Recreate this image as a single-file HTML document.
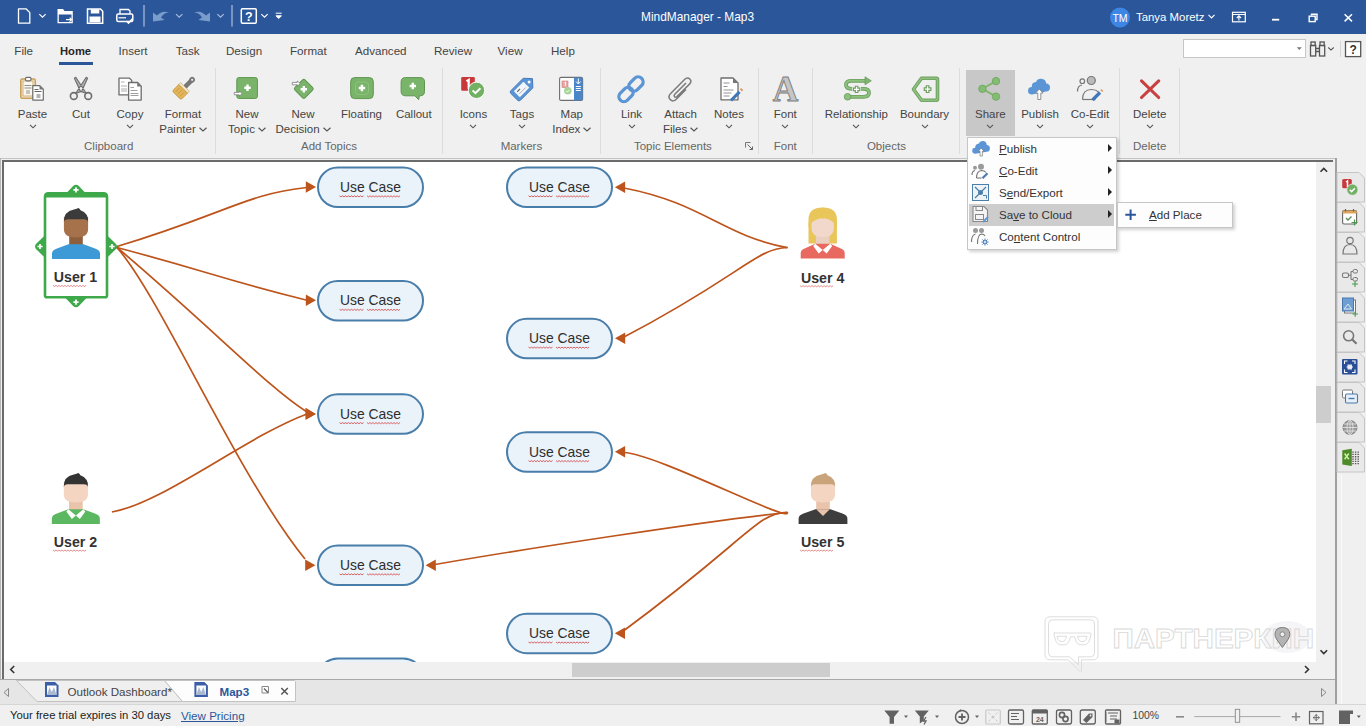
<!DOCTYPE html>
<html><head><meta charset="utf-8"><style>
*{margin:0;padding:0;box-sizing:border-box}
html,body{width:1366px;height:726px;overflow:hidden;background:#f0f0f0;font-family:"Liberation Sans",sans-serif;color:#444}
.a{position:absolute}
.tt{position:absolute;color:#fff;white-space:nowrap}
.tab{position:absolute;top:44px;font-size:11.6px;color:#444;white-space:nowrap}
.lbl{position:absolute;width:100px;font-size:11.5px;color:#444;white-space:nowrap;text-align:center;line-height:14.6px}
.glbl{position:absolute;width:120px;top:139px;font-size:11.5px;color:#666;white-space:nowrap;text-align:center;line-height:14px}
.sep{position:absolute;top:68px;width:1px;height:86px;background:#dcdcdc}
svg{position:absolute;overflow:visible}
.mi{position:absolute;left:999px;font-size:11.6px;color:#333;white-space:nowrap}
.u{text-decoration:underline}
</style></head><body>
<div class="a" style="left:0;top:0;width:1366px;height:34px;background:#2b579a"></div>
<div class="tt" style="left:641px;top:10px;font-size:11.9px">MindManager - Map3</div>
<div class="tab" style="left:14.3px;">File</div>
<div class="tab" style="left:60px;color:#262626;font-weight:bold;font-size:11.2px;top:45px">Home</div>
<div class="tab" style="left:118.6px;">Insert</div>
<div class="tab" style="left:175.7px;">Task</div>
<div class="tab" style="left:226px;">Design</div>
<div class="tab" style="left:290px;">Format</div>
<div class="tab" style="left:355px;">Advanced</div>
<div class="tab" style="left:434px;">Review</div>
<div class="tab" style="left:497.6px;">View</div>
<div class="tab" style="left:551px;">Help</div>
<div class="a" style="left:59px;top:62px;width:34px;height:3px;background:#2b579a"></div>
<div class="a" style="left:0;top:158px;width:1337px;height:1px;background:#c4c4c4"></div>
<div class="a" style="left:0;top:158px;width:1px;height:522px;background:#b8b8b8"></div>
<div class="a" style="left:2px;top:160px;width:1331px;height:2px;background:#6b6b6b"></div>
<div class="a" style="left:2px;top:160px;width:2px;height:519px;background:#6b6b6b"></div>
<div class="a" style="left:1335px;top:158px;width:2px;height:522px;background:#a0a0a0"></div>
<div class="a" style="left:1316px;top:162px;width:19px;height:517px;background:#f0f0f0"></div>
<div class="a" style="left:1316px;top:386px;width:15px;height:37px;background:#cdcdcd"></div>
<div class="a" style="left:4px;top:662px;width:1312px;height:17px;background:#f0f0f0"></div>
<div class="a" style="left:572px;top:663px;width:258px;height:14px;background:#cdcdcd"></div>
<div class="a" style="left:0;top:679px;width:1337px;height:1px;background:#a8a8a8"></div>
<svg width="1366" height="34" style="left:0;top:0" viewBox="0 0 1366 34"><path d="M18.5 8.8h7.5l3.8 3.8v10.6h-11.3z" fill="none" stroke="#fff" stroke-width="1.3" stroke-linejoin="round"/><path d="M39.3 14.2l3.2 3 3.2-3" fill="none" stroke="#fff" stroke-width="1.1"/><path d="M57.5 9h5.5l1.5 2h8.3v12.3h-15.3z" fill="#fff"/><rect x="58.8" y="14.5" width="12.7" height="7.5" fill="#2b579a"/><path d="M66 19.6h5.5 M69.6 17.6l2 2-2 2" stroke="#fff" stroke-width="1.1" fill="none"/><path d="M87.5 9h13l2.2 2.2v12.1h-15.2z" fill="none" stroke="#fff" stroke-width="1.5"/><rect x="90.8" y="9.3" width="8.5" height="4.2" fill="#fff"/><rect x="89.5" y="16.5" width="11" height="5.8" fill="#fff"/><rect x="116.8" y="14" width="16" height="7.5" rx="1.5" fill="none" stroke="#fff" stroke-width="1.5"/><path d="M120 14v-4.5h8.5l1.5 1.5v3" fill="none" stroke="#fff" stroke-width="1.3"/><path d="M118.5 17.8h7.5" stroke="#fff" stroke-width="1.2"/><path d="M126.5 21l2 2 4-4.2" stroke="#fff" stroke-width="1.6" fill="none"/><rect x="143.5" y="5" width="1" height="21.5" fill="#c8d4e8"/><path d="M153 21.5 L153 12.5 L157 15.5 Q162 10 169 12.5 Q164 12.5 161 17.5 L164.5 20z" fill="#7a9ccc"/><path d="M176 14.2l3.2 3 3.2-3" fill="none" stroke="#a9c0e0" stroke-width="1.1"/><path d="M210 21.5 L210 12.5 L206 15.5 Q201 10 194 12.5 Q199 12.5 202 17.5 L198.5 20z" fill="#7a9ccc"/><path d="M217.3 14.2l3.2 3 3.2-3" fill="none" stroke="#a9c0e0" stroke-width="1.1"/><rect x="231.5" y="5" width="1" height="21.5" fill="#c8d4e8"/><rect x="241.3" y="8.8" width="15" height="14.5" rx="1.2" fill="none" stroke="#fff" stroke-width="1.5"/><text x="248.8" y="21" font-family="Liberation Sans" font-weight="bold" font-size="12.5" fill="#fff" text-anchor="middle">?</text><path d="M261.3 14.2l3.2 3 3.2-3" fill="none" stroke="#fff" stroke-width="1.1"/><path d="M275.7 13.2h6 M276 15.8l2.7 2.7 2.7-2.7z" stroke="#fff" stroke-width="1" fill="#fff"/><circle cx="1120" cy="17.5" r="10" fill="#3d86e6"/><text x="1120" y="21.6" font-family="Liberation Sans" font-size="10.5" fill="#fff" text-anchor="middle">TM</text><path d="M1208.5 14.8l3 3 3-3" fill="none" stroke="#fff" stroke-width="1.2"/><rect x="1232.5" y="12.3" width="12.8" height="9.5" fill="none" stroke="#fff" stroke-width="1.2"/><path d="M1232.5 14.5h12.8" stroke="#fff" stroke-width="1"/><path d="M1238.9 20.5v-4.5 M1236.8 18l2.1-2.2 2.1 2.2" stroke="#fff" stroke-width="1.1" fill="none"/><rect x="1272" y="18.8" width="7.2" height="1.8" fill="#fff"/><rect x="1309.2" y="16.2" width="6" height="5.4" fill="none" stroke="#fff" stroke-width="1.4"/><path d="M1311.5 15.5v-1.3h5.5v5.3h-1.2" fill="none" stroke="#fff" stroke-width="1.4"/><path d="M1344.6 14.2l7.4 7.2 M1352 14.2l-7.4 7.2" stroke="#fff" stroke-width="1.5"/></svg>
<div class="tt" style="left:1136px;top:11px;font-size:11.4px">Tanya Moretz</div>
<div class="a" style="left:1183px;top:39px;width:123px;height:19px;background:#fff;border:1px solid #c6c6c6"></div>
<svg width="1366" height="70" style="left:0;top:0" viewBox="0 0 1366 70"><path d="M1296.8 47.3h5l-2.5 2.6z" fill="#777"/><g fill="none" stroke="#555" stroke-width="1.3"><rect x="1311" y="42" width="4.2" height="3.5"/><rect x="1320" y="42" width="4.2" height="3.5"/><rect x="1310.5" y="45.5" width="5.2" height="10.5"/><rect x="1319.5" y="45.5" width="5.2" height="10.5"/><path d="M1315.7 48.5h3.8 M1315.7 51.5h3.8"/></g><path d="M1328.3 47.5l2.7 2.6 2.7-2.6" fill="none" stroke="#555" stroke-width="1.1"/><rect x="1340" y="41" width="1" height="16" fill="#d6d6d6"/><rect x="1345.5" y="41.6" width="15.2" height="15" fill="#fff" stroke="#555" stroke-width="1.3"/><text x="1353.1" y="54" font-family="Liberation Sans" font-weight="bold" font-size="12" fill="#333" text-anchor="middle">?</text></svg>
<div class="a" style="left:966px;top:70px;width:49px;height:66px;background:#c8c8c8"></div>
<div class="lbl" style="left:-17.5px;top:107px">Paste</div>
<svg width="8" height="5" viewBox="0 0 8 5" style="left:28.5px;top:124.2px"><path d="M1 0.8 L4 3.8 L7 0.8" fill="none" stroke="#555" stroke-width="1.15"/></svg>
<div class="lbl" style="left:31px;top:107px">Cut</div>
<div class="lbl" style="left:80px;top:107px">Copy</div>
<svg width="8" height="5" viewBox="0 0 8 5" style="left:126px;top:124.2px"><path d="M1 0.8 L4 3.8 L7 0.8" fill="none" stroke="#555" stroke-width="1.15"/></svg>
<div class="lbl" style="left:311.5px;top:107px">Floating</div>
<div class="lbl" style="left:363.8px;top:107px">Callout</div>
<div class="lbl" style="left:423.4px;top:107px">Icons</div>
<svg width="8" height="5" viewBox="0 0 8 5" style="left:469.4px;top:124.2px"><path d="M1 0.8 L4 3.8 L7 0.8" fill="none" stroke="#555" stroke-width="1.15"/></svg>
<div class="lbl" style="left:472px;top:107px">Tags</div>
<svg width="8" height="5" viewBox="0 0 8 5" style="left:518px;top:124.2px"><path d="M1 0.8 L4 3.8 L7 0.8" fill="none" stroke="#555" stroke-width="1.15"/></svg>
<div class="lbl" style="left:581.5px;top:107px">Link</div>
<svg width="8" height="5" viewBox="0 0 8 5" style="left:627.5px;top:124.2px"><path d="M1 0.8 L4 3.8 L7 0.8" fill="none" stroke="#555" stroke-width="1.15"/></svg>
<div class="lbl" style="left:679px;top:107px">Notes</div>
<svg width="8" height="5" viewBox="0 0 8 5" style="left:725px;top:124.2px"><path d="M1 0.8 L4 3.8 L7 0.8" fill="none" stroke="#555" stroke-width="1.15"/></svg>
<div class="lbl" style="left:735.3px;top:107px">Font</div>
<svg width="8" height="5" viewBox="0 0 8 5" style="left:781.3px;top:124.2px"><path d="M1 0.8 L4 3.8 L7 0.8" fill="none" stroke="#555" stroke-width="1.15"/></svg>
<div class="lbl" style="left:806.3px;top:107px">Relationship</div>
<svg width="8" height="5" viewBox="0 0 8 5" style="left:852.3px;top:124.2px"><path d="M1 0.8 L4 3.8 L7 0.8" fill="none" stroke="#555" stroke-width="1.15"/></svg>
<div class="lbl" style="left:874.5px;top:107px">Boundary</div>
<svg width="8" height="5" viewBox="0 0 8 5" style="left:920.5px;top:124.2px"><path d="M1 0.8 L4 3.8 L7 0.8" fill="none" stroke="#555" stroke-width="1.15"/></svg>
<div class="lbl" style="left:940.4px;top:107px">Share</div>
<svg width="8" height="5" viewBox="0 0 8 5" style="left:986.4px;top:124.2px"><path d="M1 0.8 L4 3.8 L7 0.8" fill="none" stroke="#555" stroke-width="1.15"/></svg>
<div class="lbl" style="left:990px;top:107px">Publish</div>
<svg width="8" height="5" viewBox="0 0 8 5" style="left:1036px;top:124.2px"><path d="M1 0.8 L4 3.8 L7 0.8" fill="none" stroke="#555" stroke-width="1.15"/></svg>
<div class="lbl" style="left:1040px;top:107px">Co-Edit</div>
<svg width="8" height="5" viewBox="0 0 8 5" style="left:1086px;top:124.2px"><path d="M1 0.8 L4 3.8 L7 0.8" fill="none" stroke="#555" stroke-width="1.15"/></svg>
<div class="lbl" style="left:1099.7px;top:107px">Delete</div>
<svg width="8" height="5" viewBox="0 0 8 5" style="left:1145.7px;top:124.2px"><path d="M1 0.8 L4 3.8 L7 0.8" fill="none" stroke="#555" stroke-width="1.15"/></svg>
<div class="lbl" style="left:133px;top:107px">Format<br>Painter<svg width="8" height="5" style="position:relative;display:inline-block;vertical-align:middle;margin-left:3px" viewBox="0 0 8 5"><path d="M0.5 0.8 L4 4 L7.5 0.8" fill="none" stroke="#555" stroke-width="1.2"/></svg></div>
<div class="lbl" style="left:197px;top:107px">New<br>Topic<svg width="8" height="5" style="position:relative;display:inline-block;vertical-align:middle;margin-left:3px" viewBox="0 0 8 5"><path d="M0.5 0.8 L4 4 L7.5 0.8" fill="none" stroke="#555" stroke-width="1.2"/></svg></div>
<div class="lbl" style="left:253px;top:107px">New<br>Decision<svg width="8" height="5" style="position:relative;display:inline-block;vertical-align:middle;margin-left:3px" viewBox="0 0 8 5"><path d="M0.5 0.8 L4 4 L7.5 0.8" fill="none" stroke="#555" stroke-width="1.2"/></svg></div>
<div class="lbl" style="left:521.8px;top:107px">Map<br>Index<svg width="8" height="5" style="position:relative;display:inline-block;vertical-align:middle;margin-left:3px" viewBox="0 0 8 5"><path d="M0.5 0.8 L4 4 L7.5 0.8" fill="none" stroke="#555" stroke-width="1.2"/></svg></div>
<div class="lbl" style="left:630.6px;top:107px">Attach<br>Files<svg width="8" height="5" style="position:relative;display:inline-block;vertical-align:middle;margin-left:3px" viewBox="0 0 8 5"><path d="M0.5 0.8 L4 4 L7.5 0.8" fill="none" stroke="#555" stroke-width="1.2"/></svg></div>
<div class="glbl" style="left:48.7px">Clipboard</div>
<div class="glbl" style="left:269px">Add Topics</div>
<div class="glbl" style="left:461.4px">Markers</div>
<div class="glbl" style="left:612.9px">Topic Elements</div>
<div class="glbl" style="left:725.3px">Font</div>
<div class="glbl" style="left:826.4px">Objects</div>
<div class="glbl" style="left:1089.7px">Delete</div>
<div class="sep" style="left:215px"></div>
<div class="sep" style="left:442px"></div>
<div class="sep" style="left:600px"></div>
<div class="sep" style="left:758px"></div>
<div class="sep" style="left:812px"></div>
<div class="sep" style="left:959px"></div>
<div class="sep" style="left:1119px"></div>
<div class="sep" style="left:1179px"></div>
<svg width="1366" height="160" style="left:0;top:0" viewBox="0 0 1366 160"><rect x="20.8" y="79" width="14.5" height="19.3" rx="1.5" fill="#f3ead8" stroke="#c9a15a" stroke-width="1.6"/><rect x="23" y="81" width="10" height="15" fill="#fbf7ee" stroke="#c9a15a" stroke-width="0.8"/><rect x="25.5" y="77.3" width="5.5" height="3.5" rx="1.2" fill="#fff" stroke="#6d6d6d" stroke-width="1.2"/><path d="M24.5 85.5h7 M24.5 88h7 M26 91h4 M26 93h4" stroke="#777" stroke-width="0.8"/><path d="M32.8 85.6h7l3.5 3.5v11h-10.5z" fill="#fff" stroke="#6d6d6d" stroke-width="1.2" stroke-linejoin="round"/><path d="M39.5 85.6v3.8h3.8z" fill="#777"/><path d="M34.5 89.5h4 M34.5 91.5h7 M36.5 95h4 M36.5 97h4" stroke="#555" stroke-width="0.9"/><g fill="none" stroke="#6d6d6d" stroke-width="1.6"><circle cx="73.8" cy="96" r="3.4"/><circle cx="88.2" cy="96" r="3.4"/></g><path d="M75.8 93.2 L86.2 77.3 L87.6 78.2 L81.5 91.5z M86.2 93.2 L75.8 77.3 L74.4 78.2 L80.5 91.5z" fill="#b0b0b0" stroke="#6d6d6d" stroke-width="1.1" stroke-linejoin="round"/><path d="M119 78.2h10.5l2.2 2.2v14.5h-12.7z" fill="#fff" stroke="#6d6d6d" stroke-width="1.3" stroke-linejoin="round"/><path d="M121 82h3.5 M121 86h6 M121 89h6 M121 91h6" stroke="#999" stroke-width="0.8"/><path d="M128.6 82.5h9l3.6 3.6v14h-12.6z" fill="#fff" stroke="#6d6d6d" stroke-width="1.3" stroke-linejoin="round"/><path d="M137.2 82.5v4h4z" fill="#777"/><path d="M130.5 87.5h3.5 M130.5 90.5h7 M130.5 93.5h8 M130.5 95.5h8" stroke="#888" stroke-width="0.8"/><g transform="translate(182.5,89.5) scale(0.88) translate(-183,-89) rotate(45 183 89)"><rect x="180.5" y="73" width="5" height="12" rx="1" fill="#777"/><circle cx="183" cy="73.5" r="3.2" fill="#777"/><circle cx="183" cy="73.5" r="1.2" fill="#f0f0f0"/><rect x="176" y="85" width="14" height="3" fill="#f3e7c8" stroke="#b89a5a" stroke-width="0.6"/><path d="M176 88h14v8.5q0 2-2 2h-10q-2 0-2-2z" fill="#e3b459" stroke="#b8913f" stroke-width="0.8"/><path d="M179.5 90v6.5 M183 90v6.5 M186.5 90v6.5" stroke="#b8913f" stroke-width="0.8"/></g><rect x="236.8" y="77.6" width="20.6" height="20.8" rx="2" fill="#7ab46a" stroke="#5f9550" stroke-width="1"/><path d="M244.3 87.7h6.4 M247.5 84.5v6.4" stroke="#fff" stroke-width="2.4"/><path d="M234.3 93.6h5.5" stroke="#fff" stroke-width="2.6"/><path d="M234.3 92.4h5v-1.4l3 2.6-3 2.6v-1.4h-5z" fill="#fff" stroke="#6d6d6d" stroke-width="0.7"/><rect x="296.6" y="81.6" width="14.4" height="14.4" rx="2" transform="rotate(45 303.8 88.8)" fill="#7ab46a" stroke="#5f9550" stroke-width="1"/><path d="M300.6 89.3h6.4 M303.8 86.1v6.4" stroke="#fff" stroke-width="2.4"/><path d="M292.3 82.4h5v-1.4l3 2.6-3 2.6v-1.4h-5z" fill="#fff" stroke="#6d6d6d" stroke-width="0.7"/><rect x="350.7" y="77.6" width="22.6" height="21" rx="4" fill="#7ab46a" stroke="#5f9550" stroke-width="1"/><rect x="355.5" y="82" width="13" height="12.5" rx="3" fill="none" stroke="#8cc27c" stroke-width="1"/><path d="M358.7 88h6.4 M361.9 84.8v6.4" stroke="#fff" stroke-width="2.4"/><path d="M405.5 77.6h14.6q4.4 0 4.4 4.4v9.4q0 4.4-4.4 4.4h-0.8l-0.6 3.9-3.8-3.9h-9.4q-4.4 0-4.4-4.4v-9.4q0-4.4 4.4-4.4z" fill="#7ab46a" stroke="#5f9550" stroke-width="1"/><path d="M409.6 86h6.4 M412.8 82.8v6.4" stroke="#fff" stroke-width="2.4"/><rect x="461.2" y="77" width="13.6" height="13.8" rx="1.2" fill="#c8393b"/><path d="M466.5 81.2l2.2-1.3v9" stroke="#fff" stroke-width="2.2" fill="none"/><circle cx="476.5" cy="90.3" r="8.2" fill="#72b063" stroke="#fff" stroke-width="1"/><path d="M472.6 90.4l2.8 2.8 5-5" stroke="#fff" stroke-width="2" fill="none"/><g transform="translate(1.5,-2.2) rotate(-45 523 88.8)"><path d="M510.5 82h17.5l6.3 6.8-6.3 6.8h-17.5q-2 0-2-2v-9.6q0-2 2-2z" fill="#5b95d6" stroke="#3f78b8" stroke-width="0.9"/><rect x="512.2" y="84.6" width="13.5" height="8.4" rx="0.6" fill="#f3f6fa"/><circle cx="529.5" cy="88.8" r="1.5" fill="#fff"/><path d="M514.2 87.3h4" stroke="#666" stroke-width="1.1"/><path d="M514.2 90.3h9" stroke="#aaa" stroke-width="0.9"/></g><rect x="559.6" y="77.4" width="23" height="23" rx="1.5" fill="#fff" stroke="#6d6d6d" stroke-width="1.1"/><path d="M574 77.4h7.1q1.5 0 1.5 1.5v20q0 1.5-1.5 1.5h-7.1z" fill="#4a86c8"/><rect x="562" y="81" width="6" height="6.5" fill="#e8a7a5" stroke="#c77" stroke-width="0.6"/><path d="M564.5 82.5l1-0.6v4" stroke="#fff" stroke-width="0.9" fill="none"/><circle cx="567.8" cy="90.8" r="3.8" fill="#a8d49a"/><path d="M566 90.8l1.3 1.3 2.2-2.2" stroke="#fff" stroke-width="0.9" fill="none"/><path d="M578.3 78.5v5 M576 81.5l2.3 2.5 2.3-2.5 M575.8 86.5h5 M575.8 88.5h5 M575.8 90.5h5" stroke="#fff" stroke-width="1" fill="none"/><g fill="none" stroke="#5b95d6" stroke-width="3.3"><rect x="618" y="89.5" width="16" height="10" rx="5" transform="rotate(-45 626 94.5)"/><rect x="628" y="79" width="16" height="10" rx="5" transform="rotate(-45 636 84)"/></g><path d="M686 89.5 L676.5 99 q-3.5 3.5-6.3 0.5 q-2.8-3 0.7-6.3 L684.8 79.3 q2.8-2.6 5 -0.2 q2.3 2.4-0.3 5 L677 96.5 q-1.5 1.2-2.5 0.2 q-1-1 0.3-2.4 L686 83" fill="none" stroke="#7a7a7a" stroke-width="1.5"/><path d="M721 78h12l5 5v16.8h-17z" fill="#fff" stroke="#6d6d6d" stroke-width="1.3" stroke-linejoin="round"/><path d="M733 78v5h5z" fill="#777"/><path d="M723.5 83h6 M723.5 86.5h4 M723.5 90h10 M723.5 93h8 M723.5 96h6" stroke="#7a7a7a" stroke-width="0.8"/><path d="M731 100.5 L739.5 91.8" stroke="#3f78b8" stroke-width="3.2"/><path d="M740.8 90.4l1.4-1.4" stroke="#d8a060" stroke-width="3"/><text x="785.5" y="100.6" font-family="Liberation Serif" font-weight="bold" font-size="35" textLength="25.5" lengthAdjust="spacingAndGlyphs" text-anchor="middle" fill="#c6c6c6" stroke="#7d7d7d" stroke-width="0.9">A</text><path d="M867 80.8h-15.5q-5.5 0-5.5 4q0 4 5.5 4h12q5.5 0 5.5 4q0 4-5.5 4h-16" fill="none" stroke="#6c9d5f" stroke-width="3.8"/><path d="M867 80.8h-15.5q-5.5 0-5.5 4q0 4 5.5 4h12q5.5 0 5.5 4q0 4-5.5 4h-16" fill="none" stroke="#8cc27d" stroke-width="2"/><path d="M865 76.8l6.3 4-6.3 4z" fill="#7fb571" stroke="#6c9d5f" stroke-width="0.8"/><circle cx="847.6" cy="96.8" r="3.3" fill="#8cc27d" stroke="#6c9d5f" stroke-width="0.9"/><rect x="852.3" y="85" width="8.5" height="8.5" fill="#f0f0f0"/><path d="M856.6 85.8v7.2 M853 89.4h7.2" stroke="#6c9d5f" stroke-width="3.6"/><path d="M856.6 86.8v5.2 M854 89.4h5.2" stroke="#fff" stroke-width="1.4"/><path d="M921.5 78.3h14.8q1.2 0 1.2 1.2v19.6q0 1.2-1.2 1.2h-14.8l-8-11z" fill="#f0f0f0" stroke="#6c9d5f" stroke-width="3.6" stroke-linejoin="round"/><path d="M921.5 78.3h14.8q1.2 0 1.2 1.2v19.6q0 1.2-1.2 1.2h-14.8l-8-11z" fill="none" stroke="#8cc27d" stroke-width="1.8" stroke-linejoin="round"/><path d="M927.6 85.2v7.8 M923.7 89.1h7.8" stroke="#6c9d5f" stroke-width="3.8"/><path d="M927.6 86.3v5.6 M924.8 89.1h5.6" stroke="#fff" stroke-width="1.4"/><path d="M996 81.1 L982.4 88.8 L996 96.6" fill="none" stroke="#7db56d" stroke-width="1.8"/><g fill="#84bc74" stroke="#6ea85f" stroke-width="0.9"><circle cx="996" cy="81.1" r="3.7"/><circle cx="982.4" cy="88.8" r="3.7"/><circle cx="996" cy="96.6" r="3.7"/></g><path d="M1032 94.5q-4 0-4-3.8q0-3.6 3.8-3.8q-0.2-4.5 4.2-4.8q1.5-3.6 5.2-3.3q4.5 0.3 5 4.8q3.8 0.3 3.8 3.9q0 3.9-4 3.9z" fill="#5b95d6"/><path d="M1037.8 99.5v-6.5h-2.3l3.8-4 3.8 4h-2.3v6.5z" fill="#fff" stroke="#777" stroke-width="0.8"/><g fill="none" stroke="#777" stroke-width="1.2"><circle cx="1082.3" cy="81.2" r="2.3"/><path d="M1077.5 91.5q0-6 4.5-6.5"/><circle cx="1091.3" cy="80.5" r="4" fill="#bbb"/><path d="M1082.5 99.5q0-10 9-10 q4.5 0 7 2.5"/><path d="M1082.5 99.5h13"/></g><path d="M1092.5 100 L1100 92.5" stroke="#3f78b8" stroke-width="3.2"/><path d="M1101.2 91.2l1.2-1.2" stroke="#d8a060" stroke-width="2.6"/><path d="M1141.5 80.8 L1158.7 97.5 M1158.7 80.8 L1141.5 97.5" stroke="#c84040" stroke-width="3.1" stroke-linecap="round"/></svg>
<svg width="1366" height="160" style="left:0;top:0" viewBox="0 0 1366 160"><path d="M745.5 147.5v-5h5" fill="none" stroke="#777" stroke-width="1"/><path d="M747.5 144.5l5 5 M752.5 146.5v3h-3" fill="none" stroke="#666" stroke-width="1"/></svg>
<div class="a" style="left:4px;top:162px;width:1312px;height:500px;background:#fff"></div>
<svg width="1366" height="726" style="left:0;top:0" viewBox="0 0 1366 726"><defs><clipPath id="cv"><rect x="4" y="162" width="1312" height="500"/></clipPath></defs><g clip-path="url(#cv)"><rect x="318" y="167.5" width="105" height="39.5" rx="19.75" fill="#eaf2fa" stroke="#4a7eaa" stroke-width="2"/><text x="370.5" y="191.8" font-family="Liberation Sans" font-size="15" textLength="61" lengthAdjust="spacingAndGlyphs" fill="#2e2e2e" text-anchor="middle">Use Case</text><path d="M339.5 195.8 l1.5 1.1 l1.5 -1.1 l1.5 1.1 l1.5 -1.1 l1.5 1.1 l1.5 -1.1 l1.5 1.1 l1.5 -1.1 l1.5 1.1 l1.5 -1.1 l1.5 1.1 l1.5 -1.1 l1.5 1.1 l1.5 -1.1 l1.5 1.1 l1.5 -1.1" fill="none" stroke="#d42a2a" stroke-width="0.8" opacity="0.9"/><path d="M367 195.8 l1.5 1.1 l1.5 -1.1 l1.5 1.1 l1.5 -1.1 l1.5 1.1 l1.5 -1.1 l1.5 1.1 l1.5 -1.1 l1.5 1.1 l1.5 -1.1 l1.5 1.1 l1.5 -1.1 l1.5 1.1 l1.5 -1.1 l1.5 1.1 l1.5 -1.1 l1.5 1.1 l1.5 -1.1 l1.5 1.1 l1.5 -1.1 l1.5 1.1 l1.5 -1.1" fill="none" stroke="#d42a2a" stroke-width="0.8" opacity="0.9"/><rect x="318" y="281" width="105" height="39.5" rx="19.75" fill="#eaf2fa" stroke="#4a7eaa" stroke-width="2"/><text x="370.5" y="305.3" font-family="Liberation Sans" font-size="15" textLength="61" lengthAdjust="spacingAndGlyphs" fill="#2e2e2e" text-anchor="middle">Use Case</text><path d="M339.5 309.3 l1.5 1.1 l1.5 -1.1 l1.5 1.1 l1.5 -1.1 l1.5 1.1 l1.5 -1.1 l1.5 1.1 l1.5 -1.1 l1.5 1.1 l1.5 -1.1 l1.5 1.1 l1.5 -1.1 l1.5 1.1 l1.5 -1.1 l1.5 1.1 l1.5 -1.1" fill="none" stroke="#d42a2a" stroke-width="0.8" opacity="0.9"/><path d="M367 309.3 l1.5 1.1 l1.5 -1.1 l1.5 1.1 l1.5 -1.1 l1.5 1.1 l1.5 -1.1 l1.5 1.1 l1.5 -1.1 l1.5 1.1 l1.5 -1.1 l1.5 1.1 l1.5 -1.1 l1.5 1.1 l1.5 -1.1 l1.5 1.1 l1.5 -1.1 l1.5 1.1 l1.5 -1.1 l1.5 1.1 l1.5 -1.1 l1.5 1.1 l1.5 -1.1" fill="none" stroke="#d42a2a" stroke-width="0.8" opacity="0.9"/><rect x="318" y="394.3" width="105" height="39.5" rx="19.75" fill="#eaf2fa" stroke="#4a7eaa" stroke-width="2"/><text x="370.5" y="418.6" font-family="Liberation Sans" font-size="15" textLength="61" lengthAdjust="spacingAndGlyphs" fill="#2e2e2e" text-anchor="middle">Use Case</text><path d="M339.5 422.6 l1.5 1.1 l1.5 -1.1 l1.5 1.1 l1.5 -1.1 l1.5 1.1 l1.5 -1.1 l1.5 1.1 l1.5 -1.1 l1.5 1.1 l1.5 -1.1 l1.5 1.1 l1.5 -1.1 l1.5 1.1 l1.5 -1.1 l1.5 1.1 l1.5 -1.1" fill="none" stroke="#d42a2a" stroke-width="0.8" opacity="0.9"/><path d="M367 422.6 l1.5 1.1 l1.5 -1.1 l1.5 1.1 l1.5 -1.1 l1.5 1.1 l1.5 -1.1 l1.5 1.1 l1.5 -1.1 l1.5 1.1 l1.5 -1.1 l1.5 1.1 l1.5 -1.1 l1.5 1.1 l1.5 -1.1 l1.5 1.1 l1.5 -1.1 l1.5 1.1 l1.5 -1.1 l1.5 1.1 l1.5 -1.1 l1.5 1.1 l1.5 -1.1" fill="none" stroke="#d42a2a" stroke-width="0.8" opacity="0.9"/><rect x="318" y="545.5" width="105" height="39.5" rx="19.75" fill="#eaf2fa" stroke="#4a7eaa" stroke-width="2"/><text x="370.5" y="569.8" font-family="Liberation Sans" font-size="15" textLength="61" lengthAdjust="spacingAndGlyphs" fill="#2e2e2e" text-anchor="middle">Use Case</text><path d="M339.5 573.8 l1.5 1.1 l1.5 -1.1 l1.5 1.1 l1.5 -1.1 l1.5 1.1 l1.5 -1.1 l1.5 1.1 l1.5 -1.1 l1.5 1.1 l1.5 -1.1 l1.5 1.1 l1.5 -1.1 l1.5 1.1 l1.5 -1.1 l1.5 1.1 l1.5 -1.1" fill="none" stroke="#d42a2a" stroke-width="0.8" opacity="0.9"/><path d="M367 573.8 l1.5 1.1 l1.5 -1.1 l1.5 1.1 l1.5 -1.1 l1.5 1.1 l1.5 -1.1 l1.5 1.1 l1.5 -1.1 l1.5 1.1 l1.5 -1.1 l1.5 1.1 l1.5 -1.1 l1.5 1.1 l1.5 -1.1 l1.5 1.1 l1.5 -1.1 l1.5 1.1 l1.5 -1.1 l1.5 1.1 l1.5 -1.1 l1.5 1.1 l1.5 -1.1" fill="none" stroke="#d42a2a" stroke-width="0.8" opacity="0.9"/><rect x="507" y="167.5" width="105" height="39.5" rx="19.75" fill="#eaf2fa" stroke="#4a7eaa" stroke-width="2"/><text x="559.5" y="191.8" font-family="Liberation Sans" font-size="15" textLength="61" lengthAdjust="spacingAndGlyphs" fill="#2e2e2e" text-anchor="middle">Use Case</text><path d="M528.5 195.8 l1.5 1.1 l1.5 -1.1 l1.5 1.1 l1.5 -1.1 l1.5 1.1 l1.5 -1.1 l1.5 1.1 l1.5 -1.1 l1.5 1.1 l1.5 -1.1 l1.5 1.1 l1.5 -1.1 l1.5 1.1 l1.5 -1.1 l1.5 1.1 l1.5 -1.1" fill="none" stroke="#d42a2a" stroke-width="0.8" opacity="0.9"/><path d="M556 195.8 l1.5 1.1 l1.5 -1.1 l1.5 1.1 l1.5 -1.1 l1.5 1.1 l1.5 -1.1 l1.5 1.1 l1.5 -1.1 l1.5 1.1 l1.5 -1.1 l1.5 1.1 l1.5 -1.1 l1.5 1.1 l1.5 -1.1 l1.5 1.1 l1.5 -1.1 l1.5 1.1 l1.5 -1.1 l1.5 1.1 l1.5 -1.1 l1.5 1.1 l1.5 -1.1" fill="none" stroke="#d42a2a" stroke-width="0.8" opacity="0.9"/><rect x="507" y="318.8" width="105" height="39.5" rx="19.75" fill="#eaf2fa" stroke="#4a7eaa" stroke-width="2"/><text x="559.5" y="343.1" font-family="Liberation Sans" font-size="15" textLength="61" lengthAdjust="spacingAndGlyphs" fill="#2e2e2e" text-anchor="middle">Use Case</text><path d="M528.5 347.1 l1.5 1.1 l1.5 -1.1 l1.5 1.1 l1.5 -1.1 l1.5 1.1 l1.5 -1.1 l1.5 1.1 l1.5 -1.1 l1.5 1.1 l1.5 -1.1 l1.5 1.1 l1.5 -1.1 l1.5 1.1 l1.5 -1.1 l1.5 1.1 l1.5 -1.1" fill="none" stroke="#d42a2a" stroke-width="0.8" opacity="0.9"/><path d="M556 347.1 l1.5 1.1 l1.5 -1.1 l1.5 1.1 l1.5 -1.1 l1.5 1.1 l1.5 -1.1 l1.5 1.1 l1.5 -1.1 l1.5 1.1 l1.5 -1.1 l1.5 1.1 l1.5 -1.1 l1.5 1.1 l1.5 -1.1 l1.5 1.1 l1.5 -1.1 l1.5 1.1 l1.5 -1.1 l1.5 1.1 l1.5 -1.1 l1.5 1.1 l1.5 -1.1" fill="none" stroke="#d42a2a" stroke-width="0.8" opacity="0.9"/><rect x="507" y="432.3" width="105" height="39.5" rx="19.75" fill="#eaf2fa" stroke="#4a7eaa" stroke-width="2"/><text x="559.5" y="456.6" font-family="Liberation Sans" font-size="15" textLength="61" lengthAdjust="spacingAndGlyphs" fill="#2e2e2e" text-anchor="middle">Use Case</text><path d="M528.5 460.6 l1.5 1.1 l1.5 -1.1 l1.5 1.1 l1.5 -1.1 l1.5 1.1 l1.5 -1.1 l1.5 1.1 l1.5 -1.1 l1.5 1.1 l1.5 -1.1 l1.5 1.1 l1.5 -1.1 l1.5 1.1 l1.5 -1.1 l1.5 1.1 l1.5 -1.1" fill="none" stroke="#d42a2a" stroke-width="0.8" opacity="0.9"/><path d="M556 460.6 l1.5 1.1 l1.5 -1.1 l1.5 1.1 l1.5 -1.1 l1.5 1.1 l1.5 -1.1 l1.5 1.1 l1.5 -1.1 l1.5 1.1 l1.5 -1.1 l1.5 1.1 l1.5 -1.1 l1.5 1.1 l1.5 -1.1 l1.5 1.1 l1.5 -1.1 l1.5 1.1 l1.5 -1.1 l1.5 1.1 l1.5 -1.1 l1.5 1.1 l1.5 -1.1" fill="none" stroke="#d42a2a" stroke-width="0.8" opacity="0.9"/><rect x="507" y="613.7" width="105" height="39.5" rx="19.75" fill="#eaf2fa" stroke="#4a7eaa" stroke-width="2"/><text x="559.5" y="638.0" font-family="Liberation Sans" font-size="15" textLength="61" lengthAdjust="spacingAndGlyphs" fill="#2e2e2e" text-anchor="middle">Use Case</text><path d="M528.5 642.0 l1.5 1.1 l1.5 -1.1 l1.5 1.1 l1.5 -1.1 l1.5 1.1 l1.5 -1.1 l1.5 1.1 l1.5 -1.1 l1.5 1.1 l1.5 -1.1 l1.5 1.1 l1.5 -1.1 l1.5 1.1 l1.5 -1.1 l1.5 1.1 l1.5 -1.1" fill="none" stroke="#d42a2a" stroke-width="0.8" opacity="0.9"/><path d="M556 642.0 l1.5 1.1 l1.5 -1.1 l1.5 1.1 l1.5 -1.1 l1.5 1.1 l1.5 -1.1 l1.5 1.1 l1.5 -1.1 l1.5 1.1 l1.5 -1.1 l1.5 1.1 l1.5 -1.1 l1.5 1.1 l1.5 -1.1 l1.5 1.1 l1.5 -1.1 l1.5 1.1 l1.5 -1.1 l1.5 1.1 l1.5 -1.1 l1.5 1.1 l1.5 -1.1" fill="none" stroke="#d42a2a" stroke-width="0.8" opacity="0.9"/><rect x="318" y="658.4" width="105" height="39.5" rx="19.75" fill="#eaf2fa" stroke="#4a7eaa" stroke-width="2"/><text x="370.5" y="682.6999999999999" font-family="Liberation Sans" font-size="15" textLength="61" lengthAdjust="spacingAndGlyphs" fill="#2e2e2e" text-anchor="middle">Use Case</text><path d="M339.5 686.6999999999999 l1.5 1.1 l1.5 -1.1 l1.5 1.1 l1.5 -1.1 l1.5 1.1 l1.5 -1.1 l1.5 1.1 l1.5 -1.1 l1.5 1.1 l1.5 -1.1 l1.5 1.1 l1.5 -1.1 l1.5 1.1 l1.5 -1.1 l1.5 1.1 l1.5 -1.1" fill="none" stroke="#d42a2a" stroke-width="0.8" opacity="0.9"/><path d="M367 686.6999999999999 l1.5 1.1 l1.5 -1.1 l1.5 1.1 l1.5 -1.1 l1.5 1.1 l1.5 -1.1 l1.5 1.1 l1.5 -1.1 l1.5 1.1 l1.5 -1.1 l1.5 1.1 l1.5 -1.1 l1.5 1.1 l1.5 -1.1 l1.5 1.1 l1.5 -1.1 l1.5 1.1 l1.5 -1.1 l1.5 1.1 l1.5 -1.1 l1.5 1.1 l1.5 -1.1" fill="none" stroke="#d42a2a" stroke-width="0.8" opacity="0.9"/><path d="M116.9 246.5 C222.3 215.1 246.9 193.5 307 187.5" fill="none" stroke="#bd541b" stroke-width="1.7"/><path d="M316 187 L305.8 181.2 L305.8 192.8z" fill="#bd541b"/><path d="M116.1 247.2 C216.3 273.9 209.5 275.7 307 300.3" fill="none" stroke="#bd541b" stroke-width="1.7"/><path d="M316 300.3 L305.8 294.5 L305.8 306.1z" fill="#bd541b"/><path d="M116.5 247 C215.0 330.5 267.1 386.5 307 412" fill="none" stroke="#bd541b" stroke-width="1.7"/><path d="M315.8 413.9 L305.6 408.09999999999997 L305.6 419.7z" fill="#bd541b"/><path d="M116.5 247 C161.1 297.0 236.8 475.0 305 559" fill="none" stroke="#bd541b" stroke-width="1.7"/><path d="M315.4 565.2 L305.2 559.4000000000001 L305.2 571.0z" fill="#bd541b"/><path d="M111.9 512 C163.3 503.0 245.1 437.0 307 414" fill="none" stroke="#bd541b" stroke-width="1.7"/><path d="M315.8 413.9 L305.6 408.09999999999997 L305.6 419.7z" fill="#bd541b"/><path d="M787.3 247.6 C722.1 235.5 703.7 203.3 624 188" fill="none" stroke="#bd541b" stroke-width="1.7"/><path d="M614.9 187.2 L625.1 181.39999999999998 L625.1 193.0z" fill="#bd541b"/><path d="M787.8 247.5 C755.8 248.2 741.2 275.8 624 337" fill="none" stroke="#bd541b" stroke-width="1.7"/><path d="M615 338.3 L625.2 332.5 L625.2 344.1z" fill="#bd541b"/><path d="M787.3 512.3 C791.7 524.2 656.5 453.7 624 452.5" fill="none" stroke="#bd541b" stroke-width="1.7"/><path d="M614.9 451.8 L625.1 446.0 L625.1 457.6z" fill="#bd541b"/><path d="M787.2 512.5 C714.0 519.9 519.1 549.8 435 564.5" fill="none" stroke="#bd541b" stroke-width="1.7"/><path d="M425.6 565.3 L435.8 559.5 L435.8 571.0999999999999z" fill="#bd541b"/><path d="M787.5 512.3 C757.9 512.1 748.0 538.8 624 630.5" fill="none" stroke="#bd541b" stroke-width="1.7"/><path d="M614.8 633.2 L625.0 627.4000000000001 L625.0 639.0z" fill="#bd541b"/></g></svg>
<svg width="1366" height="726" style="left:0;top:0" viewBox="0 0 1366 726"><rect x="69.2" y="232" width="13.6" height="13" fill="#8e5f3d"/><path d="M52 259 L52 253.5 Q52 250 57 248.5 L68.5 244.3 L83.5 244.3 L95 248.5 Q100 250 100 253.5 L100 259z" fill="#3d9ad6"/><path d="M63.9 217 L88.1 217 L88.1 229 Q88.1 237.5 76 237.5 Q63.9 237.5 63.9 229z" fill="#a5724b"/><path d="M63.9 222 Q63.4 211.5 74 209.5 Q77 208.8 78.5 208 Q80 209 80.5 210.2 Q88.6 213 88.1 222 Q87.5 219.3 84 219.3 L68 219.3 Q64.5 219.3 63.9 222z" fill="#3b3b3b"/><rect x="69.05" y="497" width="13.6" height="13" fill="#e9c3aa"/><path d="M51.849999999999994 524 L51.849999999999994 518.5 Q51.849999999999994 515 56.849999999999994 513.5 L68.35 509.3 L83.35 509.3 L94.85 513.5 Q99.85 515 99.85 518.5 L99.85 524z" fill="#5cb860"/><path d="M68.35 509.3 L75.85 515.5 L71.85 519 L66.35 511.5z M83.35 509.3 L75.85 515.5 L79.85 519 L85.35 511.5z" fill="#fff"/><path d="M63.74999999999999 482 L87.94999999999999 482 L87.94999999999999 494 Q87.94999999999999 502.5 75.85 502.5 Q63.74999999999999 502.5 63.74999999999999 494z" fill="#f3d5c2"/><path d="M63.74999999999999 487 Q63.24999999999999 476.5 73.85 474.5 Q76.85 473.8 78.35 473 Q79.85 474 80.35 475.2 Q88.44999999999999 478 87.94999999999999 487 Q87.35 484.3 83.85 484.3 L67.85 484.3 Q64.35 484.3 63.74999999999999 487z" fill="#333"/><path d="M808.5 243.4 L808.5 219.4 Q808.5 207.4 822.7 207.4 Q836.9000000000001 207.4 836.9000000000001 219.4 L836.9000000000001 243.4z" fill="#e8c65a"/><rect x="815.9000000000001" y="231.4" width="13.6" height="13" fill="#ead0c0"/><path d="M800.7 258.4 L800.7 252.9 Q800.7 249.4 805.7 247.9 L815.2 243.7 L830.2 243.7 L839.7 247.9 Q844.7 249.4 844.7 252.9 L844.7 258.4z" fill="#e8695f"/><path d="M815.2 243.7 L822.7 249.9 L818.7 253.4 L813.2 245.9z M830.2 243.7 L822.7 249.9 L826.7 253.4 L832.2 245.9z" fill="#fff"/><path d="M811.5 216.4 L833.9000000000001 216.4 L833.9000000000001 228.4 Q833.9000000000001 236.9 822.7 236.9 Q811.5 236.9 811.5 228.4z" fill="#f2d8cb"/><path d="M808.5 227.4 Q808.5 207.70000000000002 822.7 207.70000000000002 Q836.9000000000001 207.70000000000002 836.9000000000001 227.4 Q833.7 219.4 823.7 217.9 L822.7 219.4 L821.7 217.9 Q811.7 219.4 808.5 227.4z" fill="#e8c65a"/><rect x="816.2" y="497" width="13.6" height="13" fill="#e9c3aa"/><path d="M798.6 524 L798.6 518.5 Q798.6 515 803.6 513.5 L815.5 509.3 L830.5 509.3 L842.4 513.5 Q847.4 515 847.4 518.5 L847.4 524z" fill="#3d3d3d"/><path d="M816.2 509.2 L823 516 L829.8 509.2z" fill="#e9c3aa"/><path d="M810.9 482 L835.1 482 L835.1 494 Q835.1 502.5 823 502.5 Q810.9 502.5 810.9 494z" fill="#f3d5c2"/><path d="M810.9 487 Q810.4 476.5 821 474.5 Q824 473.8 825.5 473 Q827 474 827.5 475.2 Q835.6 478 835.1 487 Q834.5 484.3 831 484.3 L815 484.3 Q811.5 484.3 810.9 487z" fill="#c9a47a"/><path d="M45 197 Q45 193.2 48.5 193.2 L103.5 193.2 Q107 193.2 107 197 L107 295.5 Q107 297.3 105 297.3 L47 297.3 Q45 297.3 45 295.5z" fill="none" stroke="#3ea84a" stroke-width="2.6"/><rect x="45" y="193.2" width="62" height="4.3" fill="#3ea84a"/><g transform="rotate(0 76 194)"><path d="M65.5 194 L73.4 185.8 Q76 183.8 78.6 185.8 L86.5 194z" fill="#3ea84a"/><path d="M73.4 189.8h5.2 M76 187.2v5.2" stroke="#fff" stroke-width="1.7"/></g><g transform="rotate(180 76 298)"><path d="M65.5 298 L73.4 289.8 Q76 287.8 78.6 289.8 L86.5 298z" fill="#3ea84a"/><path d="M73.4 293.8h5.2 M76 291.2v5.2" stroke="#fff" stroke-width="1.7"/></g><g transform="rotate(270 44.2 246.5)"><path d="M33.7 246.5 L41.6 238.3 Q44.2 236.3 46.800000000000004 238.3 L54.7 246.5z" fill="#3ea84a"/><path d="M41.6 242.3h5.2 M44.2 239.7v5.2" stroke="#fff" stroke-width="1.7"/></g><g transform="rotate(90 107.8 246.5)"><path d="M97.3 246.5 L105.2 238.3 Q107.8 236.3 110.39999999999999 238.3 L118.3 246.5z" fill="#3ea84a"/><path d="M105.2 242.3h5.2 M107.8 239.7v5.2" stroke="#fff" stroke-width="1.7"/></g><text x="75.5" y="282.2" font-family="Liberation Sans" font-weight="bold" font-size="14.2" fill="#333" text-anchor="middle">User 1</text><path d="M53.0 285.4 l1.5 1.1 l1.5 -1.1 l1.5 1.1 l1.5 -1.1 l1.5 1.1 l1.5 -1.1 l1.5 1.1 l1.5 -1.1 l1.5 1.1 l1.5 -1.1 l1.5 1.1 l1.5 -1.1 l1.5 1.1 l1.5 -1.1 l1.5 1.1 l1.5 -1.1 l1.5 1.1 l1.5 -1.1 l1.5 1.1 l1.5 -1.1 l1.5 1.1 l1.5 -1.1" fill="none" stroke="#d03030" stroke-width="0.7" opacity="0.8"/><text x="75.5" y="546.8" font-family="Liberation Sans" font-weight="bold" font-size="14.2" fill="#333" text-anchor="middle">User 2</text><path d="M53.0 550.0 l1.5 1.1 l1.5 -1.1 l1.5 1.1 l1.5 -1.1 l1.5 1.1 l1.5 -1.1 l1.5 1.1 l1.5 -1.1 l1.5 1.1 l1.5 -1.1 l1.5 1.1 l1.5 -1.1 l1.5 1.1 l1.5 -1.1 l1.5 1.1 l1.5 -1.1 l1.5 1.1 l1.5 -1.1 l1.5 1.1 l1.5 -1.1 l1.5 1.1 l1.5 -1.1" fill="none" stroke="#d03030" stroke-width="0.7" opacity="0.8"/><text x="822.6" y="282.5" font-family="Liberation Sans" font-weight="bold" font-size="14.2" fill="#333" text-anchor="middle">User 4</text><path d="M800.1 285.7 l1.5 1.1 l1.5 -1.1 l1.5 1.1 l1.5 -1.1 l1.5 1.1 l1.5 -1.1 l1.5 1.1 l1.5 -1.1 l1.5 1.1 l1.5 -1.1 l1.5 1.1 l1.5 -1.1 l1.5 1.1 l1.5 -1.1 l1.5 1.1 l1.5 -1.1 l1.5 1.1 l1.5 -1.1 l1.5 1.1 l1.5 -1.1 l1.5 1.1 l1.5 -1.1" fill="none" stroke="#d03030" stroke-width="0.7" opacity="0.8"/><text x="822.6" y="546.8" font-family="Liberation Sans" font-weight="bold" font-size="14.2" fill="#333" text-anchor="middle">User 5</text><path d="M800.1 550.0 l1.5 1.1 l1.5 -1.1 l1.5 1.1 l1.5 -1.1 l1.5 1.1 l1.5 -1.1 l1.5 1.1 l1.5 -1.1 l1.5 1.1 l1.5 -1.1 l1.5 1.1 l1.5 -1.1 l1.5 1.1 l1.5 -1.1 l1.5 1.1 l1.5 -1.1 l1.5 1.1 l1.5 -1.1 l1.5 1.1 l1.5 -1.1 l1.5 1.1 l1.5 -1.1" fill="none" stroke="#d03030" stroke-width="0.7" opacity="0.8"/></svg>
<div class="a" style="left:1337px;top:158px;width:29px;height:546px;background:#f0f0f0"></div>
<div class="a" style="left:1335px;top:158px;width:2px;height:546px;background:#a0a0a0"></div>
<svg width="1366" height="726" style="left:0;top:0" viewBox="0 0 1366 726"><path d="M1337 172.5 L1359 172.5 L1364.5 178.0 L1364.5 202.0 L1337 202.0z" fill="#e9e9e9" stroke="#c4c4c4" stroke-width="1"/><path d="M1337 202.5 L1359 202.5 L1364.5 208.0 L1364.5 232.0 L1337 232.0z" fill="#e9e9e9" stroke="#c4c4c4" stroke-width="1"/><path d="M1337 232.5 L1359 232.5 L1364.5 238.0 L1364.5 262.0 L1337 262.0z" fill="#e9e9e9" stroke="#c4c4c4" stroke-width="1"/><path d="M1337 262.5 L1359 262.5 L1364.5 268.0 L1364.5 292.0 L1337 292.0z" fill="#e9e9e9" stroke="#c4c4c4" stroke-width="1"/><path d="M1337 292.5 L1359 292.5 L1364.5 298.0 L1364.5 322.0 L1337 322.0z" fill="#e9e9e9" stroke="#c4c4c4" stroke-width="1"/><path d="M1337 322.5 L1359 322.5 L1364.5 328.0 L1364.5 352.0 L1337 352.0z" fill="#e9e9e9" stroke="#c4c4c4" stroke-width="1"/><path d="M1337 352.5 L1359 352.5 L1364.5 358.0 L1364.5 382.0 L1337 382.0z" fill="#e9e9e9" stroke="#c4c4c4" stroke-width="1"/><path d="M1337 382.5 L1359 382.5 L1364.5 388.0 L1364.5 412.0 L1337 412.0z" fill="#e9e9e9" stroke="#c4c4c4" stroke-width="1"/><path d="M1337 412.5 L1359 412.5 L1364.5 418.0 L1364.5 442.0 L1337 442.0z" fill="#e9e9e9" stroke="#c4c4c4" stroke-width="1"/><path d="M1337 442.5 L1359 442.5 L1364.5 448.0 L1364.5 472.0 L1337 472.0z" fill="#e9e9e9" stroke="#c4c4c4" stroke-width="1"/><rect x="1342.2" y="179" width="9.6" height="9.2" rx="1.5" fill="#c8393b"/><path d="M1346 182l1.5-1v6" stroke="#fff" stroke-width="1.5" fill="none"/><circle cx="1352.4" cy="189.7" r="5.6" fill="#72b063" stroke="#e9e9e9" stroke-width="0.8"/><path d="M1349.8 189.8l1.8 1.8 3.3-3.3" stroke="#fff" stroke-width="1.5" fill="none"/><rect x="1342.6" y="210.5" width="14" height="13.5" rx="1.5" fill="#fff" stroke="#666" stroke-width="1.1"/><rect x="1342.6" y="210.5" width="14" height="3" fill="#e0a45a"/><path d="M1345.5 209v2.5 M1353.5 209v2.5" stroke="#666" stroke-width="1.2"/><path d="M1346 218l2 2 3.5-3.5" stroke="#5a8a55" stroke-width="1.3" fill="none"/><path d="M1351.5 222.5h6 M1354.5 219.5v6" stroke="#4a9a4a" stroke-width="1.2"/><circle cx="1350" cy="240.5" r="3.2" fill="none" stroke="#777" stroke-width="1.2"/><path d="M1343 254 q0-9.5 7-9.5 q7 0 7 9.5z" fill="none" stroke="#777" stroke-width="1.2"/><rect x="1342.5" y="273" width="6" height="4.5" rx="1.5" fill="none" stroke="#777" stroke-width="1.1"/><path d="M1348.5 275.2h2.5 M1351 271.5v8 M1351 271.5h2 M1351 279.5h2" stroke="#777" stroke-width="1.1" fill="none"/><rect x="1353" y="269.5" width="4.5" height="3.5" rx="1.5" fill="none" stroke="#777" stroke-width="1"/><rect x="1353" y="277.5" width="4.5" height="3.5" rx="1.5" fill="none" stroke="#777" stroke-width="1"/><path d="M1352 284h6 M1355 281v6" stroke="#4a9a4a" stroke-width="1.1"/><rect x="1344.5" y="300" width="11" height="13" fill="#fff" stroke="#777" stroke-width="1"/><rect x="1342.5" y="298" width="11" height="13" fill="#6e9fd3" stroke="#4a78ad" stroke-width="1"/><path d="M1344 309l4-5 3.5 5z" fill="none" stroke="#dce8f5" stroke-width="1"/><path d="M1352.5 314h5.5 M1355.2 311.3v5.5" stroke="#4a9a4a" stroke-width="1.1"/><circle cx="1348.6" cy="335.8" r="5" fill="none" stroke="#777" stroke-width="1.6"/><path d="M1352.2 339.5l4.3 4.3" stroke="#777" stroke-width="2.2"/><rect x="1342" y="359" width="15.5" height="15.5" rx="1" fill="#2b4f96"/><path d="M1344.5 364v-3h3 M1352 361h3v3 M1355 369.5v3h-3 M1347.5 372.5h-3v-3" stroke="#fff" stroke-width="1.1" fill="none"/><path d="M1346.5 367h6.5" stroke="#fff" stroke-width="0.9"/><rect x="1347.5" y="364.5" width="4.5" height="5" fill="#fff" opacity="0.85"/><rect x="1342.5" y="390" width="10" height="8" rx="1.2" fill="#fff" stroke="#777" stroke-width="1"/><rect x="1345.5" y="394" width="12" height="9" rx="1.2" fill="#e6f0fa" stroke="#4a78ad" stroke-width="1.1"/><path d="M1348.5 398.5h6" stroke="#4a78ad" stroke-width="1.4"/><circle cx="1350" cy="427.5" r="7" fill="#999" stroke="#777" stroke-width="0.8"/><path d="M1343 427.5h14 M1344 424h12 M1344 431h12 M1350 420.5v14" stroke="#e9e9e9" stroke-width="0.8"/><ellipse cx="1350" cy="427.5" rx="3" ry="7" fill="none" stroke="#e9e9e9" stroke-width="0.8"/><path d="M1342.3 450.3l9.5-1.6v17.4l-9.5-1.6z" fill="#4e8a2a"/><path d="M1344.6 453.5l4.2 5.8 M1348.8 453.5l-4.2 5.8" stroke="#c8f0a0" stroke-width="1.5"/><path d="M1353 451.5v13 M1355.6 451.5v13 M1358.2 451.5v13" stroke="#555" stroke-width="1.4" stroke-dasharray="1.3 1"/><path d="M1341.5 475v229" stroke="#fafafa" stroke-width="1"/></svg>
<div class="a" style="left:0;top:680px;width:1335px;height:24px;background:#e6e6e6"></div>
<div class="a" style="left:0;top:704px;width:1366px;height:1px;background:#d6d6d6"></div>
<svg width="1366" height="726" style="left:0;top:0" viewBox="0 0 1366 726"><path d="M8.5 688.5v8l-4.5-4z" fill="none" stroke="#888" stroke-width="1"/><path d="M1321.5 688.5v8l4.5-4z" fill="none" stroke="#888" stroke-width="1"/><path d="M16.5 680.5 L164.5 680.5 L182.5 701.5 L37 701.5z" fill="#efefef" stroke="#c2c2c2" stroke-width="1"/><path d="M164.5 680.5 L294.5 680.5 L295.5 681.5 L295.5 701.5 L182.5 701.5z" fill="#fdfdfd" stroke="#c2c2c2" stroke-width="1"/><path d="M45 682h10l3.5 3.5v11.5h-13.5z" fill="#3b5ea8"/><rect x="47" y="685.5" width="9.5" height="9.5" fill="#fff"/><path d="M47 695 L49.5 687 L51.8 692 L54 687 L56.5 695z" fill="#aab8d0"/><path d="M194.4 682h10l3.5 3.5v11.5h-13.5z" fill="#3b5ea8"/><rect x="196.4" y="685.5" width="9.5" height="9.5" fill="#fff"/><path d="M196.4 695 L198.9 687 L201.20000000000002 692 L203.4 687 L205.9 695z" fill="#aab8d0"/><path d="M262 686.5h6.5v6.5 M262 686.5v6.5h6.5" fill="none" stroke="#888" stroke-width="1"/><path d="M264 688.5l4 4" stroke="#555" stroke-width="1.1"/><path d="M281.3 688l6.5 6.5 M287.8 688l-6.5 6.5" stroke="#555" stroke-width="1.5"/></svg>
<div class="a" style="left:67.5px;top:684.5px;width:105px;overflow:hidden;font-size:11.6px;color:#444;white-space:nowrap">Outlook Dashboard*</div>
<div class="a" style="left:219.5px;top:684.5px;font-size:11.6px;font-weight:bold;color:#2b579a;white-space:nowrap">Map3</div>
<svg width="1366" height="726" style="left:0;top:0" viewBox="0 0 1366 726"><path d="M1320.5 171.8l3.3-3.3 3.3 3.3" fill="none" stroke="#333" stroke-width="1.6"/><path d="M1320.5 650.3l3.3 3.3 3.3-3.3" fill="none" stroke="#333" stroke-width="1.6"/><path d="M14.2 666l-3.5 3.5 3.5 3.5" fill="none" stroke="#333" stroke-width="1.6"/><path d="M1305 666l3.5 3.5-3.5 3.5" fill="none" stroke="#333" stroke-width="1.6"/></svg>
<div class="a" style="left:10px;top:709px;font-size:11.3px;color:#222;white-space:nowrap">Your free trial expires in 30 days</div>
<div class="a" style="left:181px;top:709px;font-size:11.6px;color:#2b579a;white-space:nowrap;text-decoration:underline">View Pricing</div>
<div class="a" style="left:1132.5px;top:709.5px;font-size:10.4px;color:#444;white-space:nowrap">100%</div>
<svg width="1366" height="726" style="left:0;top:0" viewBox="0 0 1366 726"><path d="M884.3 710.5h15l-5.3 6.5v6.8h-4.4v-6.8z" fill="#626262"/><path d="M904 715.5h4l-2 2.5z" fill="#626262"/><path d="M914.8 710.5h14l-5 6v4l-4 3v-7z" fill="#626262"/><path d="M926 717l-2.5 4h2.5l-2 3.5" stroke="#626262" stroke-width="1.3" fill="none"/><path d="M935 715.5h4l-2 2.5z" fill="#626262"/><circle cx="962" cy="717" r="6.5" fill="none" stroke="#626262" stroke-width="1.5"/><path d="M958.5 717h7 M962 713.5v7" stroke="#626262" stroke-width="1.8"/><path d="M959 710.5l2-1.5-0.5 3z" fill="#626262"/><path d="M975 715.5h4l-2 2.5z" fill="#626262"/><rect x="985.8" y="710" width="14.5" height="14" rx="1" fill="none" stroke="#c8c8c8" stroke-width="1.2"/><circle cx="993" cy="717" r="1.6" fill="#c8c8c8"/><path d="M988.5 712.5l2 2 M997.5 712.5l-2 2 M988.5 721.5l2-2 M997.5 721.5l-2-2" stroke="#c8c8c8" stroke-width="1"/><rect x="1008.5" y="710" width="15" height="14" rx="1.5" fill="none" stroke="#626262" stroke-width="1.3"/><path d="M1011 713.5h8 M1011 716.5h6 M1011 719.5h8" stroke="#626262" stroke-width="1.1"/><rect x="1032.3" y="710" width="15" height="14" rx="1" fill="none" stroke="#626262" stroke-width="1.3"/><rect x="1032.3" y="710" width="15" height="3.5" fill="#626262"/><text x="1039.8" y="722.3" font-family="Liberation Sans" font-weight="bold" font-size="7" fill="#626262" text-anchor="middle">24</text><rect x="1056.5" y="710" width="15" height="14" rx="2" fill="none" stroke="#626262" stroke-width="1.3"/><circle cx="1062" cy="715" r="2.6" fill="none" stroke="#626262" stroke-width="1.6"/><circle cx="1065.5" cy="719" r="2.6" fill="none" stroke="#626262" stroke-width="1.6"/><rect x="1080.3" y="710" width="15" height="14" rx="2" fill="none" stroke="#626262" stroke-width="1.3"/><path d="M1083 720l6-6.5h3.5v3.5l-6 6z" fill="#626262"/><circle cx="1090.5" cy="715.5" r="0.9" fill="#f0f0f0"/><rect x="1105.5" y="710" width="15" height="14" rx="1" fill="none" stroke="#626262" stroke-width="1.3"/><path d="M1108 713h10 M1110 716h7 M1110 719h7" stroke="#626262" stroke-width="1.1"/><path d="M1106.5 712.5v10" stroke="#626262" stroke-width="0.8" stroke-dasharray="1 1"/><rect x="1114.5" y="719.5" width="5" height="4" fill="#626262"/><path d="M1176 716.8h8" stroke="#888" stroke-width="1.6"/><path d="M1194.3 716.6h86.2" stroke="#a8a8a8" stroke-width="1"/><rect x="1235.3" y="709.3" width="4.4" height="13" fill="#f0f0f0" stroke="#888" stroke-width="0.9"/><path d="M1291.8 716.8h8.4 M1296 712.6v8.4" stroke="#888" stroke-width="1.6"/><rect x="1309.5" y="711.5" width="13.5" height="12.3" fill="none" stroke="#626262" stroke-width="1.2"/><path d="M1313 717.6h6.5 M1316.2 714.4v6.5" stroke="#626262" stroke-width="0.9"/><path d="M1314.6 716.3l-1.5 1.3 1.5 1.3 M1317.9 716.3l1.5 1.3-1.5 1.3 M1314.9 716l1.3-1.5 1.3 1.5 M1314.9 719.2l1.3 1.5 1.3-1.5" stroke="#626262" stroke-width="0.8" fill="none"/><path d="M1339 710.5h14v3.5h-2.5v10h-11.5z" fill="#626262"/><path d="M1350.5 714v10" stroke="#f0f0f0" stroke-width="1"/><path d="M1356.8 715.5h4l-2 2.5z" fill="#626262"/></svg>
<div class="a" style="left:967px;top:136.5px;width:150px;height:113px;background:#fdfdfd;border:1px solid #c6c6c6;box-shadow:2px 2px 3px rgba(0,0,0,0.18)"></div>
<div class="a" style="left:969px;top:204px;width:145px;height:22px;background:#cdcdcd"></div>
<div class="mi" style="top:142px"><span class=u>P</span>ublish</div>
<div class="mi" style="top:164px"><span class=u>C</span>o-Edit</div>
<div class="mi" style="top:186px">S<span class=u>e</span>nd/Export</div>
<div class="mi" style="top:208px">Sa<span class=u>v</span>e to Cloud</div>
<div class="mi" style="top:230px">Co<span class=u>n</span>tent Control</div>
<svg width="1366" height="726" style="left:0;top:0" viewBox="0 0 1366 726"><path d="M1108 144l4 4-4 4z" fill="#222"/><path d="M1108 166l4 4-4 4z" fill="#222"/><path d="M1108 188l4 4-4 4z" fill="#222"/><path d="M1108 210l4 4-4 4z" fill="#222"/><path transform="translate(0,1.2)" d="M975.5 152.5q-3.3 0-3.3-3q0-2.9 3-3q-0.1-3.6 3.4-3.9q1.2-2.9 4.2-2.7q3.6 0.2 4 3.9q3.1 0.3 3.1 3.2q0 3.5-3.3 3.5z" fill="#5b95d6"/><path d="M980 156v-4.8h-1.8l3-3 3 3h-1.8v4.8z" fill="#fff" stroke="#777" stroke-width="0.7"/><circle cx="975" cy="167.8" r="2" fill="#9a9a9a"/><circle cx="981" cy="166.8" r="3" fill="#9a9a9a"/><g fill="none" stroke="#777" stroke-width="1.1"><path d="M972 175q0-4 3-4.5"/><path d="M976.5 178q0-7 5-7.5 q3 0 4.5 2"/><path d="M976.5 178h5"/></g><path d="M982.5 178.3l5-5" stroke="#4a7ab0" stroke-width="2.2"/><rect x="972.5" y="184.5" width="16" height="16" fill="#eef3f8" stroke="#4b7ea8" stroke-width="1"/><path d="M975 187l4 4 M986 187l-4 4 M975 198l4-4" stroke="#4b7ea8" stroke-width="1.2"/><circle cx="980.5" cy="192.5" r="2.5" fill="#4b7ea8"/><path d="M983 195.5h3.5v3" stroke="#4b7ea8" stroke-width="1" fill="none"/><path d="M973 206.5h11l3.5 3.5v11.5h-14.5z" fill="#f4f4f4" stroke="#888" stroke-width="1.1"/><rect x="976" y="206.5" width="6.5" height="4" fill="none" stroke="#888" stroke-width="1"/><rect x="975.5" y="214.5" width="8" height="5" fill="none" stroke="#888" stroke-width="1"/><path d="M983 222l5-5" stroke="#5b95d6" stroke-width="1.8"/><circle cx="975.5" cy="230.5" r="2.5" fill="#9a9a9a"/><circle cx="981.5" cy="230.5" r="2.5" fill="#9a9a9a"/><g fill="none" stroke="#777" stroke-width="1.1"><path d="M971.5 242q0-7 4-8 M977.5 244q0-9.5 4-10 q2.5 0 3.5 2"/></g><g stroke="#3f78b8" stroke-width="1"><path d="M985 238.5v7 M981.5 242h7 M982.5 239.5l5 5 M987.5 239.5l-5 5"/></g><circle cx="985" cy="242" r="1.5" fill="#fff" stroke="#3f78b8" stroke-width="0.8"/></svg>
<div class="a" style="left:1117px;top:202px;width:116px;height:25.5px;background:#fdfdfd;border:1px solid #c6c6c6;box-shadow:2px 2px 3px rgba(0,0,0,0.18)"></div>
<svg width="1366" height="726" style="left:0;top:0" viewBox="0 0 1366 726"><path d="M1125.3 214.8h10.6 M1130.6 209.5v10.6" stroke="#2b579a" stroke-width="2"/></svg>
<div class="mi" style="left:1149px;top:208.3px"><span class=u>A</span>dd Place</div>
<svg width="1366" height="726" style="left:0;top:0" viewBox="0 0 1366 726"><path d="M1050 616.8 h43 q5 0 5 5 v33 q0 5-5 5 h-11.5 v10.5 q0 3-2.3 0.5 l-11-11 h-18.2 q-5 0-5-5 v-33 q0-5 5-5z" fill="none" stroke="#d9d9d9" stroke-width="0.9"/><path d="M1052.5 619.8 h38 q4 0 4 4 v29 q0 4-4 4 h-12 v8 l-9-8 h-17 q-4 0-4-4 v-29 q0-4 4-4z" fill="none" stroke="#d9d9d9" stroke-width="0.9"/><path d="M1054 633 h36 q1.5 0 1 2 l-1.5 5 q-1.5 4.8-5.5 4.8 h-3 q-4 0-5.5-4.8 l-1-3.2 h-4 l-1 3.2 q-1.5 4.8-5.5 4.8 h-3 q-4 0-5.5-4.8 l-1.5-5 q-0.5-2 1-2z" fill="none" stroke="#d9d9d9" stroke-width="0.9"/><path d="M1057 636.3 h9.5 l-1 3 q-0.8 2.2-3 2.2 h-1.5 q-2.2 0-3-2.2z M1077.5 636.3 h9.5 l-1 3 q-0.8 2.2-3 2.2 h-1.5 q-2.2 0-3-2.2z" fill="none" stroke="#d9d9d9" stroke-width="0.9"/><ellipse cx="1287" cy="637" rx="24" ry="16" fill="#f2f2f6" opacity="0.8"/><text x="1112.5" y="648" font-family="Liberation Sans" font-weight="bold" font-size="28" textLength="201.5" lengthAdjust="spacingAndGlyphs" fill="none" stroke="#d9d9d9" stroke-width="0.9">ПАРТНЕРКИН</text><path d="M1282.4 647.5 L1276.5 639 Q1275 636.5 1275 634.5 Q1275 627.5 1282.4 627.5 Q1289.8 627.5 1289.8 634.5 Q1289.8 636.5 1288.3 639z" fill="#b4b4b4" stroke="#7a7a7a" stroke-width="1"/><circle cx="1282.4" cy="634.3" r="2.4" fill="#f0f0f0" stroke="#7a7a7a" stroke-width="0.8"/></svg>
</body></html>
